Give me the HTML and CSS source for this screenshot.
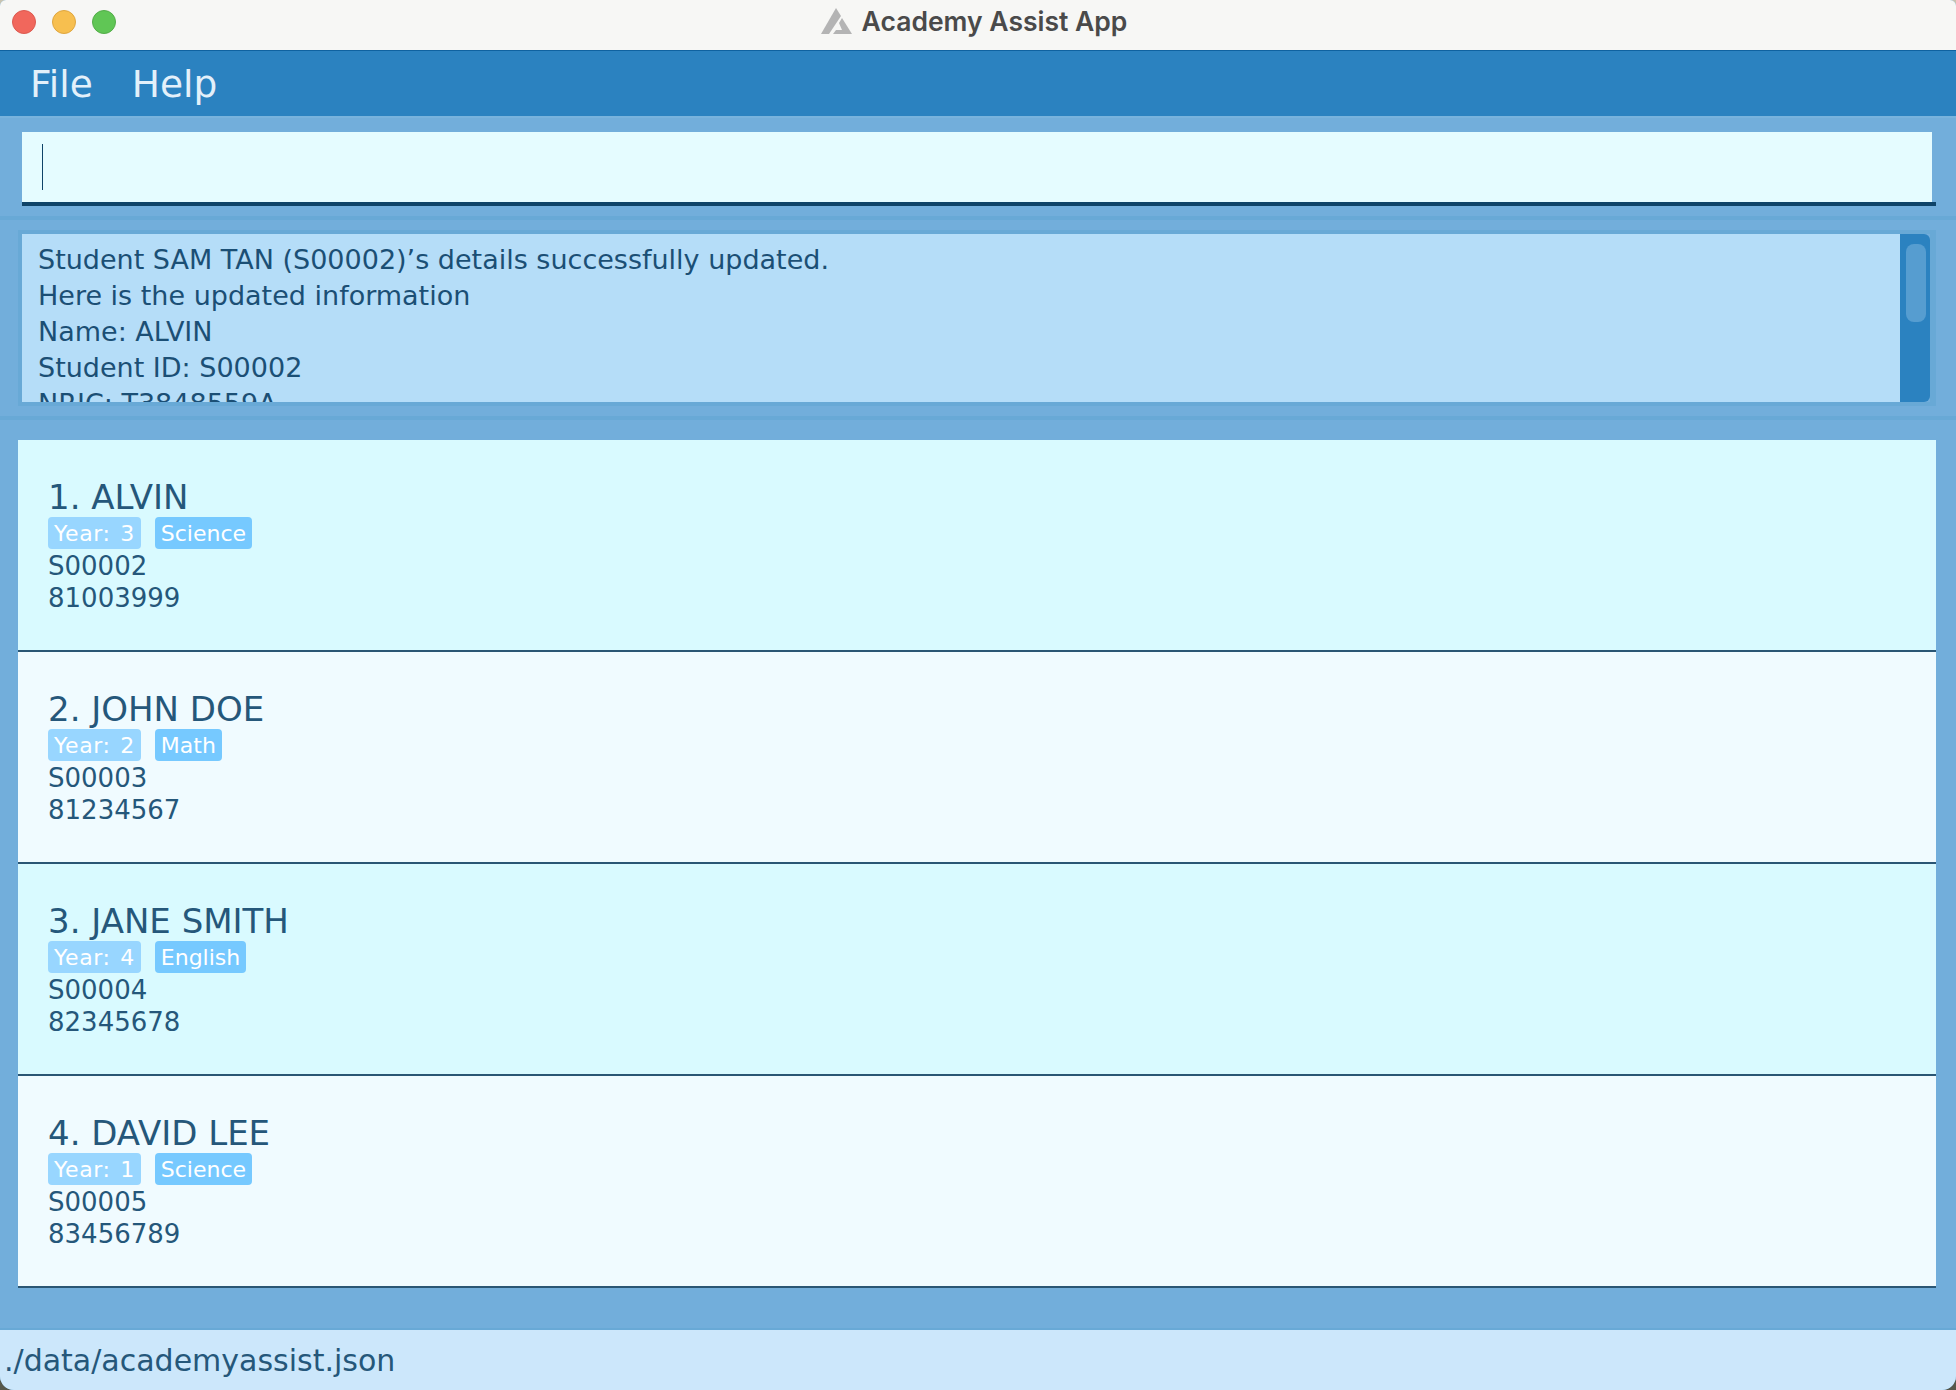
FILE: index.html
```html
<!DOCTYPE html>
<html lang="en">
<head>
    <meta charset="UTF-8">
    <meta name="viewport" content="width=device-width, initial-scale=1.0">
    <title>Academy Assist App</title>
    <link rel="stylesheet" href="styles.css">
</head>
<body>
    <div class="window">
        <div class="title-bar">
            <div class="traffic">
                <span class="light red"></span>
                <span class="light yellow"></span>
                <span class="light green"></span>
            </div>
            <div class="title">
                <svg class="title-icon" width="32" height="28" viewBox="0 0 32 28">
                    <path fill="#b4b4b4" d="M16 1 L21 9 L9 27 H1 Z"/>
                    <path fill="#b4b4b4" d="M22 11 L32 27 H13 L16 23 H22 L19 16 Z"/>
                </svg>
                <span>Academy Assist App</span>
            </div>
        </div>

        <nav class="menu-bar">
            <span class="menu-item">File</span>
            <span class="menu-item">Help</span>
        </nav>

        <div class="command-pane">
            <div class="command-box">
                <div class="command-input"><span class="caret"></span></div>
            </div>
        </div>

        <div class="result-pane">
            <div class="result-box">
                <div class="result-text">
                    <div>Student SAM TAN (S00002)’s details successfully updated.</div>
                    <div>Here is the updated information</div>
                    <div>Name: ALVIN</div>
                    <div>Student ID: S00002</div>
                    <div>NRIC: T3848559A</div>
                </div>
                <div class="scroll-track"><div class="scroll-thumb"></div></div>
            </div>
        </div>

        <div class="list-pane">
            <div class="card odd">
                <div class="name">1. ALVIN</div>
                <div class="tags"><span class="tag year">Year: 3</span><span class="tag">Science</span></div>
                <div class="line">S00002</div>
                <div class="line">81003999</div>
            </div>
            <div class="card">
                <div class="name">2. JOHN DOE</div>
                <div class="tags"><span class="tag year">Year: 2</span><span class="tag">Math</span></div>
                <div class="line">S00003</div>
                <div class="line">81234567</div>
            </div>
            <div class="card odd">
                <div class="name">3. JANE SMITH</div>
                <div class="tags"><span class="tag year">Year: 4</span><span class="tag">English</span></div>
                <div class="line">S00004</div>
                <div class="line">82345678</div>
            </div>
            <div class="card">
                <div class="name">4. DAVID LEE</div>
                <div class="tags"><span class="tag year">Year: 1</span><span class="tag">Science</span></div>
                <div class="line">S00005</div>
                <div class="line">83456789</div>
            </div>
        </div>

        <div class="status-bar">./data/academyassist.json</div>
    </div>
</body>
</html>
```

FILE: styles.css
```css
* {
    box-sizing: border-box;
}

html, body {
    margin: 0;
    height: 100%;
}

body {
    background: linear-gradient(#c9c4b0, #55574a);
    font-family: "DejaVu Sans", sans-serif;
    overflow: hidden;
}

.window {
    height: 1390px;
    display: flex;
    flex-direction: column;
    background: #72aedb;
    border-radius: 6px 6px 14px 14px;
    overflow: hidden;
}

.title-bar {
    height: 51px;
    flex: none;
    position: relative;
    display: flex;
    align-items: center;
    justify-content: center;
    background: #f7f7f5;
    border-bottom: 1px solid #0f62a0;
}

.traffic {
    position: absolute;
    left: 12px;
    top: 10px;
    display: flex;
    gap: 16px;
}

.light {
    width: 24px;
    height: 24px;
    border-radius: 50%;
}

.red { background: #f1675c; border: 1px solid #dc5a50; }
.yellow { background: #f7bf4f; border: 1px solid #dfa63f; }
.green { background: #60c655; border: 1px solid #53ad49; }

.title {
    display: flex;
    align-items: center;
    gap: 10px;
    font-family: Inter, sans-serif;
    font-size: 26.5px;
    font-weight: 600;
    color: #4a4a4a;
    margin: 0 9px 9px 0;
}

.menu-bar {
    height: 65px;
    flex: none;
    display: flex;
    align-items: center;
    padding-left: 30px;
    gap: 39px;
    background: #2b82c0;
    color: #e3f0fa;
    font-size: 37.5px;
}

.command-pane {
    height: 104px;
    flex: none;
    padding: 14px 20px 0 22px;
    border-top: 2px solid #78b3dd;
    border-bottom: 4px solid #68a9d6;
}

.command-box {
    height: 74px;
    border-bottom: 4px solid #0f4468;
}

.command-input {
    height: 70px;
    margin-right: 4px;
    padding: 12px 0 0 20px;
    background: #e5fcff;
}

.caret {
    display: block;
    width: 1px;
    height: 46px;
    background: #0f4468;
}

.result-pane {
    height: 200px;
    flex: none;
    padding: 10px 20px 0 18px;
    border-bottom: 4px solid #68a9d6;
}

.result-box {
    height: 176px;
    display: flex;
    border: 4px solid #68a9d6;
    border-right-width: 6px;
}

.result-text {
    flex: 1;
    overflow: hidden;
    padding: 8px 0 0 16px;
    font-size: 27px;
    line-height: 36px;
    color: #1b4f75;
    background: #b5ddf8;
}

.scroll-track {
    width: 30px;
    flex: none;
    padding: 10px 4px 0 6px;
    background: #2b82c0;
    border-radius: 0 6px 6px 0;
}

.scroll-thumb {
    height: 78px;
    background: #569dd0;
    border-radius: 8px;
}

.list-pane {
    flex: 1;
    padding: 20px 20px 0 18px;
}

.card {
    height: 212px;
    padding: 39px 0 0 30px;
    background: #f0fbff;
    border-bottom: 2px solid #2a5674;
    color: #25577a;
}

.card.odd {
    background: #d9faff;
}

.name {
    font-size: 34px;
    line-height: 36px;
}

.tags {
    display: flex;
    gap: 14px;
    margin: 2px 0 1px;
}

.tag {
    height: 32px;
    padding: 0 6px;
    display: flex;
    align-items: center;
    font-size: 22px;
    color: #fff;
    background: #76c9ff;
    border-radius: 4px;
}

.tag.year {
    background: #98d6ff;
    letter-spacing: 0.6px;
    word-spacing: 2px;
}

.line {
    font-size: 26px;
    line-height: 32px;
}

.status-bar {
    height: 62px;
    flex: none;
    padding-left: 4px;
    display: flex;
    align-items: center;
    font-size: 30px;
    color: #25577a;
    background: #cce7fb;
    border-top: 2px solid #68a9d6;
}
```
